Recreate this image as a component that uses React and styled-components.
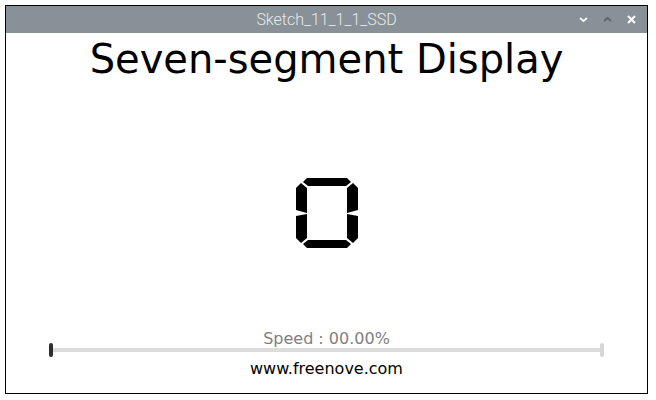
import React from "react";
import styled, { createGlobalStyle } from "styled-components";

const GlobalStyle = createGlobalStyle`
  html, body {
    margin: 0;
    padding: 0;
    background: #ffffff;
  }
  body {
    font-family: "DejaVu Sans", sans-serif;
  }
`;

const Page = styled.div`
  width: 656px;
  height: 400px;
  padding: 5px 0 0 5px;
  box-sizing: border-box;
`;

const Window = styled.div`
  width: 643px;
  height: 389px;
  box-sizing: border-box;
  border: 1px solid #000;
  display: flex;
  flex-direction: column;
  background: #fff;
`;

const TitleBar = styled.div`
  height: 27px;
  background: #879197;
  display: flex;
  align-items: center;
  justify-content: center;
  position: relative;
  font-family: Roboto, "Liberation Sans", sans-serif;
  font-weight: 300;
  font-size: 16px;
  color: #e6e9eb;
`;

const WinButtons = styled.div`
  position: absolute;
  right: 11px;
  top: 0;
  height: 27px;
  display: flex;
  align-items: center;
  gap: 15px;
`;

const WinBtn = styled.svg`
  width: 9px;
  height: 9px;
  display: block;
`;

const Content = styled.div`
  flex: 1;
  display: flex;
  flex-direction: column;
  align-items: center;
`;

const Heading = styled.h1`
  margin: 3px 0 0;
  font-weight: normal;
  font-size: 40px;
  line-height: 46px;
  color: #000;
`;

const Digit = styled.svg`
  display: block;
  width: 64px;
  height: 72px;
  margin-top: 95px;
`;

const SpeedLabel = styled.div`
  margin-top: 81px;
  font-size: 16px;
  line-height: 18px;
  color: #808080;
`;

const SliderRow = styled.div`
  align-self: stretch;
  margin: -5px 43px 0;
  height: 14px;
  display: flex;
  align-items: center;
  position: relative;
`;

const Track = styled.div`
  flex: 1;
  height: 4px;
  background: #dcdcdc;
  border-radius: 2px;
  position: relative;
  &::after {
    content: "";
    position: absolute;
    right: 0;
    top: -5px;
    width: 4px;
    height: 14px;
    border-radius: 2px;
    background: #d6d6d6;
  }
`;

const Handle = styled.div`
  position: absolute;
  left: 0;
  top: 0;
  width: 4px;
  height: 14px;
  border-radius: 2px;
  background: #2e2e2e;
`;

const Site = styled.div`
  margin-top: 3px;
  font-size: 16px;
  line-height: 18px;
  color: #000;
`;

const segments = [
  // top
  [[8, 5], [12, 1], [52, 1], [56, 5], [51, 9], [13, 9]],
  // upper left
  [[1, 11], [6, 6], [12, 11], [12, 36], [1, 33]],
  // lower left
  [[1, 39], [12, 37], [12, 61], [6, 66], [1, 61]],
  // bottom
  [[8, 67], [13, 63], [51, 63], [56, 67], [52, 71], [12, 71]],
];

const mirror = (pts) => pts.map(([x, y]) => [64 - x, y]);

const allSegments = [
  segments[0],
  segments[1],
  segments[2],
  segments[3],
  mirror(segments[1]),
  mirror(segments[2]),
];

const App = () => {
  return (
    <>
      <GlobalStyle />
      <Page>
        <Window>
          <TitleBar>
            Sketch_11_1_1_SSD
            <WinButtons>
              <WinBtn viewBox="0 0 9 9">
                <path d="M1 3 L4.5 6 L8 3" fill="none" stroke="#f2f4f5" strokeWidth="2" />
              </WinBtn>
              <WinBtn viewBox="0 0 9 9">
                <path d="M1 6 L4.5 3 L8 6" fill="none" stroke="#5c666b" strokeWidth="2" />
              </WinBtn>
              <WinBtn viewBox="0 0 9 9">
                <path d="M1 1 L8 8 M8 1 L1 8" fill="none" stroke="#f7f8f9" strokeWidth="2.2" />
              </WinBtn>
            </WinButtons>
          </TitleBar>
          <Content>
            <Heading>Seven-segment Display</Heading>
            <Digit viewBox="0 0 64 72">
              {allSegments.map((pts, i) => (
                <polygon key={i} points={pts.map((p) => p.join(",")).join(" ")} fill="#000" />
              ))}
            </Digit>
            <SpeedLabel>Speed : 00.00%</SpeedLabel>
            <SliderRow>
              <Track />
              <Handle />
            </SliderRow>
            <Site>www.freenove.com</Site>
          </Content>
        </Window>
      </Page>
    </>
  );
};

export default App;
